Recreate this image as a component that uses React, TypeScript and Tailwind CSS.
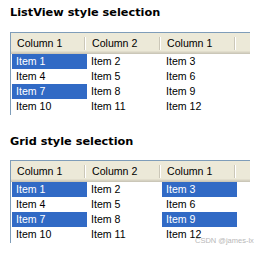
import React from 'react'

const rows = [
  ['Item 1', 'Item 2', 'Item 3'],
  ['Item 4', 'Item 5', 'Item 6'],
  ['Item 7', 'Item 8', 'Item 9'],
  ['Item 10', 'Item 11', 'Item 12'],
]

const headers = ['Column 1', 'Column 2', 'Column 1']

// XP 风格的列表控件，isSelected 决定哪些单元格高亮
function ListBox({ isSelected }: { isSelected: (r: number, c: number) => boolean }) {
  return (
    <div className="w-[240px] border-l border-t border-[#7F9DB9] pb-[1px]">
      <div className="bg-[#ECE9D8]">
        <div className="flex h-[18px]">
          {headers.map((h, i) => (
            <div key={i} className="flex w-[75px]">
              <div className="flex-1 pl-[6px] pt-[4px] text-[10.6px] leading-[13px] text-black">{h}</div>
              <div className="mt-[4px] h-[13px] w-[1px] bg-[#CBC7B8]" />
              <div className="mt-[4px] h-[13px] w-[1px] bg-white" />
            </div>
          ))}
        </div>
        <div className="h-[1px] bg-[#E2DECD]" />
        <div className="h-[1px] bg-[#D6D2C2]" />
        <div className="h-[1px] bg-[#CBC7B8]" />
      </div>
      <div className="bg-white pl-[1px]">
        {rows.map((row, r) => (
          <div key={r} className="flex h-[15px]">
            {row.map((cell, c) => (
              <div
                key={c}
                className={
                  isSelected(r, c)
                    ? 'w-[75px] bg-[#316AC5] pl-[4px] text-[10.6px] leading-[15px] text-white'
                    : 'w-[75px] pl-[4px] text-[10.6px] leading-[15px] text-black'
                }
              >
                {cell}
              </div>
            ))}
          </div>
        ))}
      </div>
    </div>
  )
}

export default function App() {
  return (
    <div
      className="relative h-[255px] w-[267px] bg-white pl-[10px] pt-[6px]"
      style={{ fontFamily: '"Liberation Sans", Arial, sans-serif' }}
    >
      <h2 className="h-[14px] font-['DejaVu_Sans',sans-serif] text-[11.3px] leading-[14px] font-bold text-black">
        ListView style selection
      </h2>
      <div className="mt-[12px]">
        <ListBox isSelected={(r, c) => c === 0 && (r === 0 || r === 2)} />
      </div>
      <h2 className="mt-[20px] h-[14px] font-['DejaVu_Sans',sans-serif] text-[11.3px] leading-[14px] font-bold text-black">
        Grid style selection
      </h2>
      <div className="mt-[11px]">
        <ListBox isSelected={(r, c) => c !== 1 && (r === 0 || r === 2)} />
      </div>
      <div className="absolute left-[195px] top-[236px] text-[7.5px] leading-[9px] text-[#B8B8B8]">
        CSDN @james-lx
      </div>
    </div>
  )
}
